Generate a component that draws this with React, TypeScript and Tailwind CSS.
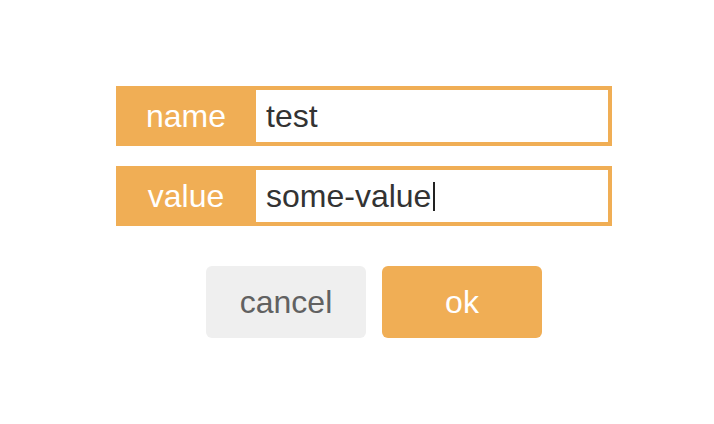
import React from 'react';

const Field: React.FC<{ label: string; value: string; caret?: boolean }> = ({ label, value, caret }) => (
  <div className="flex h-[60px] w-[496px]">
    <div className="flex w-[140px] items-center justify-center bg-[#f0ae55] text-white">{label}</div>
    <div className="flex flex-1 items-center border-y-4 border-r-4 border-[#f0ae55] bg-white pl-[10px] text-[#333]">
      <span>{value}</span>
      {caret && <span className="ml-[2px] h-[29px] w-[2px] bg-[#222]" />}
    </div>
  </div>
);

export default function App() {
  return (
    <div className="h-[424px] w-[714px] bg-white pl-[116px] pt-[86px] font-['Liberation_Sans',Arial,sans-serif] text-[32px] leading-none">
      <div className="flex flex-col gap-5">
        <Field label="name" value="test" />
        <Field label="value" value="some-value" caret />
      </div>
      <div className="ml-[90px] mt-10 flex gap-4">
        <button className="h-[72px] w-[160px] rounded-md bg-[#efefef] text-[#616161]">cancel</button>
        <button className="h-[72px] w-[160px] rounded-md bg-[#f0ae55] text-white">ok</button>
      </div>
    </div>
  );
}
